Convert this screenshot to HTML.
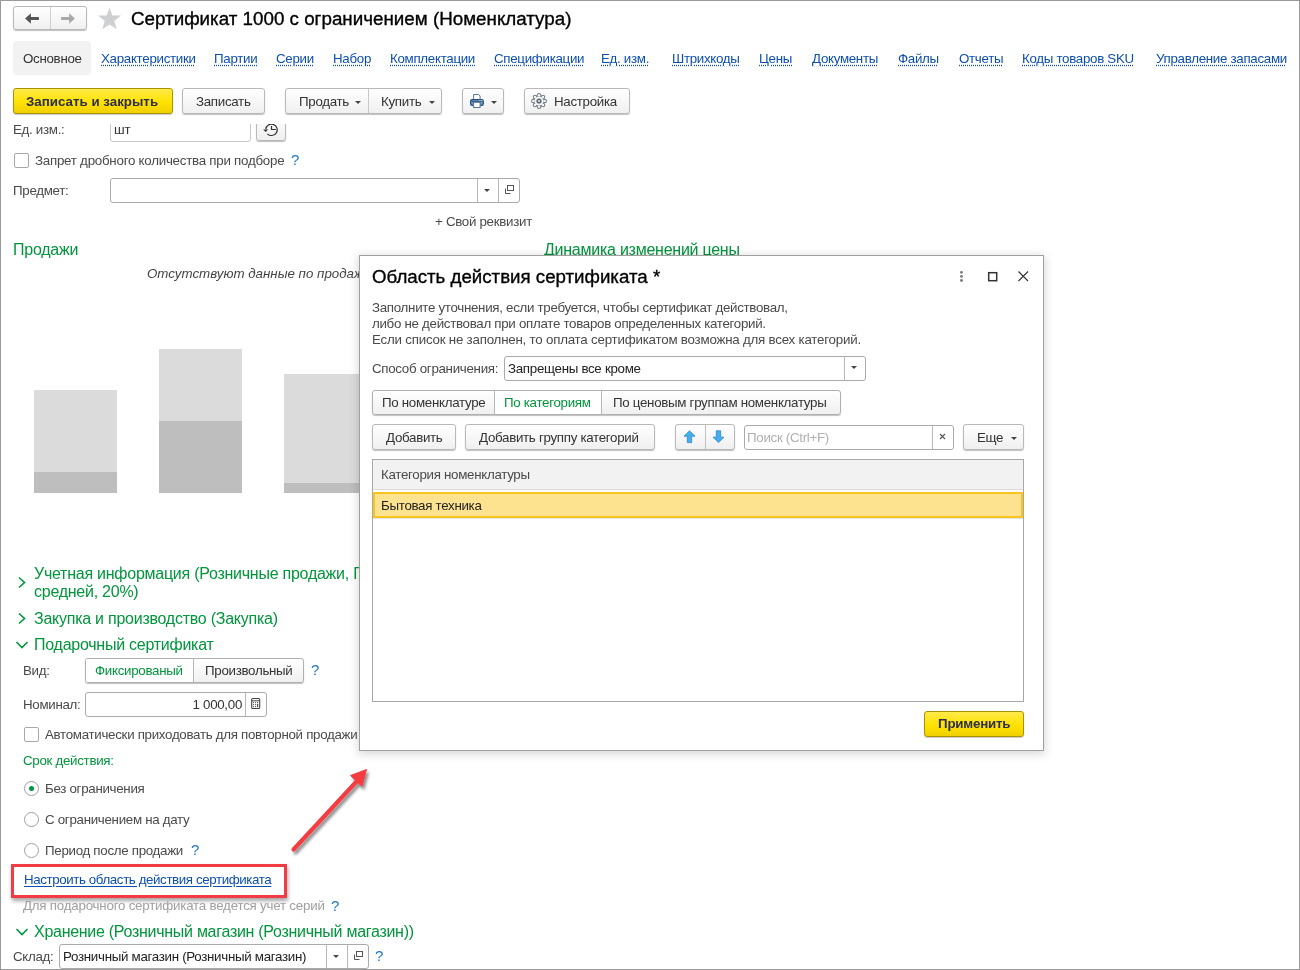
<!DOCTYPE html>
<html><head><meta charset="utf-8">
<style>
*{box-sizing:border-box}
html,body{margin:0;padding:0;width:1300px;height:970px;overflow:hidden;background:#fff}
body{position:relative;font-family:"Liberation Sans",sans-serif;font-size:13.33px;color:#4a4a4a}
.frame{position:absolute;left:0;top:0;width:1300px;height:970px;border-top:1px solid #999;border-left:1px solid #999;border-right:1px solid #999;border-bottom:1px solid #999;z-index:50;pointer-events:none}
.t{position:absolute;will-change:transform;white-space:nowrap;line-height:16px;font-size:13.33px;letter-spacing:-0.3px}
.g{color:#00963c}
.lk{color:#0d4fb0;text-decoration:underline dotted;text-underline-offset:2px}
.h{position:absolute;will-change:transform;white-space:nowrap;line-height:18px;font-size:16px;color:#00963c;letter-spacing:-0.25px}
.btn{position:absolute;height:26px;border:1px solid #b8b8b8;border-radius:3px;background:linear-gradient(#ffffff,#f0f0f0);box-shadow:0 1px 1px rgba(0,0,0,.25)}
.yb{position:absolute;border:1px solid #a89200;border-radius:3px;background:linear-gradient(#ffea4a,#ffe200 55%,#f0d000);box-shadow:0 1px 1px rgba(0,0,0,.2)}
.fld{position:absolute;border:1px solid #aaaaaa;border-radius:3px;background:#fff}
.vl{position:absolute;width:1px;background:#b8b8b8}
.bar{position:absolute}
.q{color:#1f78c8;font-size:14px;line-height:1px;font-weight:bold;letter-spacing:0}
.qq{position:absolute;will-change:transform;color:#1f78c8;font-size:15px;line-height:16px;white-space:nowrap}
.arr{position:absolute;width:0;height:0;border-left:3px solid transparent;border-right:3px solid transparent;border-top:3px solid #444}
</style></head><body>
<div class="frame"></div>

<!-- header -->
<div class="btn" style="left:13px;top:6px;width:74px;height:24px"></div>
<div class="vl" style="left:50px;top:7px;height:22px;background:#d0d0d0"></div>
<svg style="position:absolute;left:24px;top:13px" width="16" height="12" viewBox="0 0 16 12"><path d="M1.1 5.45 L6.9 0.2 V3.9 H14.9 V6.9 H6.9 V10.7 Z" fill="#555"/></svg>
<svg style="position:absolute;left:60px;top:13px" width="16" height="12" viewBox="0 0 16 12"><path d="M14.9 5.45 L9.1 0.2 V3.9 H1.1 V6.9 H9.1 V10.7 Z" fill="#a8a8a8"/></svg>
<svg style="position:absolute;left:97px;top:7px" width="25" height="23" viewBox="0 0 25 23"><path d="M12.5 0.5 L15.4 8.4 L24 8.6 L17.3 13.9 L19.7 22.3 L12.5 17.4 L5.3 22.3 L7.7 13.9 L1 8.6 L9.6 8.4 Z" fill="#cfd0d2"/></svg>
<div class="t" style="left:131px;top:8px;font-size:18.8px;line-height:22px;color:#000;letter-spacing:0;-webkit-text-stroke:0.35px #000">Сертификат 1000 с ограничением (Номенклатура)</div>

<!-- tabs -->
<div style="position:absolute;left:13px;top:41px;width:78px;height:34px;background:#f2f2f2;border-radius:4px"></div>
<div class="t" style="left:23px;top:51px;color:#333">Основное</div>
<div class="t lk" style="left:101px;top:51px">Характеристики</div>
<div class="t lk" style="left:214px;top:51px">Партии</div>
<div class="t lk" style="left:276px;top:51px">Серии</div>
<div class="t lk" style="left:333px;top:51px">Набор</div>
<div class="t lk" style="left:390px;top:51px">Комплектации</div>
<div class="t lk" style="left:494px;top:51px">Спецификации</div>
<div class="t lk" style="left:601px;top:51px">Ед. изм.</div>
<div class="t lk" style="left:672px;top:51px">Штрихкоды</div>
<div class="t lk" style="left:759px;top:51px">Цены</div>
<div class="t lk" style="left:812px;top:51px">Документы</div>
<div class="t lk" style="left:898px;top:51px">Файлы</div>
<div class="t lk" style="left:959px;top:51px">Отчеты</div>
<div class="t lk" style="left:1022px;top:51px">Коды товаров SKU</div>
<div class="t lk" style="left:1156px;top:51px">Управление запасами</div>


<!-- toolbar -->
<div class="yb" style="left:13px;top:88px;width:160px;height:26px"></div>
<div class="t" style="left:26px;top:94px;font-weight:bold;color:#2d2f4a;letter-spacing:0">Записать и закрыть</div>
<div class="btn" style="left:182px;top:88px;width:83px"></div>
<div class="t" style="left:196px;top:94px;color:#333">Записать</div>
<div class="btn" style="left:285px;top:88px;width:157px"></div>
<div class="vl" style="left:368px;top:89px;height:24px;background:#c8c8c8"></div>
<div class="t" style="left:299px;top:94px;color:#333">Продать</div>
<div class="arr" style="left:355px;top:101px"></div>
<div class="t" style="left:381px;top:94px;color:#333">Купить</div>
<div class="arr" style="left:429px;top:101px"></div>
<div class="btn" style="left:462px;top:88px;width:42px"></div>
<svg style="position:absolute;left:469px;top:93px" width="16" height="16" viewBox="0 0 16 16">
<path d="M4.6 1.5 H9.6 L11.1 3 V6.5 H4.6 Z" fill="#fff" stroke="#5d7594" stroke-width="1"/>
<rect x="1.6" y="6.6" width="12.7" height="5.8" rx="1.6" fill="#6f97c4" stroke="#224c7a" stroke-width="1.2"/>
<path d="M2.8 8.5 H13" stroke="#2f5279" stroke-width="0.9"/>
<circle cx="10.9" cy="7.6" r="0.55" fill="#fff"/><circle cx="12.8" cy="7.6" r="0.55" fill="#fff"/>
<rect x="4.6" y="9.3" width="6.5" height="5.2" fill="#fff" stroke="#5d7594" stroke-width="1"/>
</svg>
<div class="arr" style="left:491px;top:101px"></div>
<div class="btn" style="left:524px;top:88px;width:106px"></div>
<svg style="position:absolute;left:530px;top:92px" width="18" height="18" viewBox="0 0 18 18"><g fill="#737b86"><circle cx="9.00" cy="3.30" r="2.25"/><circle cx="13.03" cy="4.97" r="2.25"/><circle cx="14.70" cy="9.00" r="2.25"/><circle cx="13.03" cy="13.03" r="2.25"/><circle cx="9.00" cy="14.70" r="2.25"/><circle cx="4.97" cy="13.03" r="2.25"/><circle cx="3.30" cy="9.00" r="2.25"/><circle cx="4.97" cy="4.97" r="2.25"/><circle cx="9.0" cy="9.0" r="5.6"/></g><g fill="#f3f3f3"><circle cx="9.00" cy="3.30" r="1.25"/><circle cx="13.03" cy="4.97" r="1.25"/><circle cx="14.70" cy="9.00" r="1.25"/><circle cx="13.03" cy="13.03" r="1.25"/><circle cx="9.00" cy="14.70" r="1.25"/><circle cx="4.97" cy="13.03" r="1.25"/><circle cx="3.30" cy="9.00" r="1.25"/><circle cx="4.97" cy="4.97" r="1.25"/><circle cx="9.0" cy="9.0" r="4.6"/></g><circle cx="9.0" cy="9.0" r="2.6" fill="#5f6874"/><circle cx="9.0" cy="9.0" r="0.9" fill="#fff"/></svg>
<div class="t" style="left:554px;top:94px;color:#333">Настройка</div>

<!-- scrolled form top -->
<div style="position:absolute;left:0;top:124px;width:1300px;height:20px;overflow:hidden">
<div style="position:absolute;left:0;top:-124px;width:1300px;height:200px">
<div class="t" style="left:13px;top:122px">Ед. изм.:</div>
<div class="fld" style="left:110px;top:110px;width:141px;height:32px;border-color:#c8c8c8"></div>
<div class="t" style="left:114px;top:122px;color:#333">шт</div>
<div class="btn" style="left:256px;top:110px;width:30px;height:31px"></div>
<svg style="position:absolute;left:258px;top:120px" width="26" height="20" viewBox="0 0 26 20"><path d="M7.8 9.3 A5.7 5.7 0 1 1 9.4 13.8" stroke="#333" fill="none" stroke-width="1.2"/><path d="M5.1 9.4 H10.3 L7.7 12.1 Z" fill="#333"/><path d="M13.5 6.1 V9.5 H17.8" stroke="#333" fill="none" stroke-width="1.2"/></svg>
</div></div>
<div style="position:absolute;left:14px;top:153px;width:15px;height:15px;border:1px solid #a8a8a8;border-radius:2px;background:#fff"></div>
<div class="t" style="left:35px;top:153px;letter-spacing:-0.25px">Запрет дробного количества при подборе</div><div class="qq" style="left:291px;top:152px">?</div>
<div class="t" style="left:13px;top:183px">Предмет:</div>
<div class="fld" style="left:110px;top:178px;width:410px;height:25px"></div>
<div class="vl" style="left:477px;top:179px;height:23px"></div>
<div class="vl" style="left:498px;top:179px;height:23px"></div>
<div class="arr" style="left:484px;top:189px"></div>
<svg style="position:absolute;left:504px;top:184px" width="11" height="11" viewBox="0 0 11 11"><rect x="3.5" y="1.5" width="6" height="5" fill="none" stroke="#555"/><path d="M1.5 4.5V9.5H6.5" fill="none" stroke="#555"/></svg>
<div class="t" style="left:435px;top:214px">+ Свой реквизит</div>

<!-- charts -->
<div class="h" style="left:13px;top:241px">Продажи</div>
<div class="h" style="left:544px;top:241px">Динамика изменений цены</div>
<div class="t" style="left:147px;top:266px;font-style:italic;color:#444;font-size:13.33px;letter-spacing:0">Отсутствуют данные по продажам</div>
<div class="bar" style="left:34px;top:390px;width:83px;height:82px;background:#dbdbdb"></div>
<div class="bar" style="left:34px;top:472px;width:83px;height:21px;background:#bebebe"></div>
<div class="bar" style="left:159px;top:349px;width:83px;height:72px;background:#dbdbdb"></div>
<div class="bar" style="left:159px;top:421px;width:83px;height:72px;background:#bebebe"></div>
<div class="bar" style="left:284px;top:374px;width:83px;height:109px;background:#dbdbdb"></div>
<div class="bar" style="left:284px;top:483px;width:83px;height:10px;background:#bebebe"></div>

<!-- sections -->
<svg style="position:absolute;left:17px;top:576px" width="10" height="13" viewBox="0 0 10 13"><path d="M2 1.5 L7.5 6.5 L2 11.5" fill="none" stroke="#00963c" stroke-width="1.6"/></svg>
<div class="h" style="left:34px;top:565px">Учетная информация (Розничные продажи, По средней, 20%)</div>
<div class="h" style="left:34px;top:583px">средней, 20%)</div>
<svg style="position:absolute;left:17px;top:612px" width="10" height="13" viewBox="0 0 10 13"><path d="M2 1.5 L7.5 6.5 L2 11.5" fill="none" stroke="#00963c" stroke-width="1.6"/></svg>
<div class="h" style="left:34px;top:610px">Закупка и производство (Закупка)</div>
<svg style="position:absolute;left:15px;top:640px" width="14" height="10" viewBox="0 0 14 10"><path d="M1.5 2 L7 7.5 L12.5 2" fill="none" stroke="#00963c" stroke-width="1.6"/></svg>
<div class="h" style="left:34px;top:636px">Подарочный сертификат</div>

<div class="t" style="left:23px;top:663px">Вид:</div>
<div class="btn" style="left:85px;top:658px;width:219px;height:25px;border-color:#b0b0b0"></div>
<div style="position:absolute;left:86px;top:659px;width:107px;height:23px;background:#fff;border-radius:2px 0 0 2px"></div>
<div class="vl" style="left:193px;top:659px;height:23px;background:#b8b8b8"></div>
<div class="t g" style="left:95px;top:663px">Фиксированый</div>
<div class="t" style="left:205px;top:663px;color:#333">Произвольный</div>
<div class="qq" style="left:311px;top:662px">?</div>
<div class="t" style="left:23px;top:697px">Номинал:</div>
<div class="fld" style="left:85px;top:692px;width:182px;height:25px"></div>
<div class="vl" style="left:245px;top:693px;height:23px"></div>
<div class="t" style="left:140px;top:697px;width:102px;text-align:right;color:#333">1 000,00</div>
<svg style="position:absolute;left:250px;top:697px" width="11" height="13" viewBox="0 0 11 13"><rect x="1.7" y="1.5" width="8" height="10" rx="1" fill="none" stroke="#444" stroke-width="1.1"/><path d="M1.7 3.8H9.7" stroke="#444" stroke-width="1"/><g fill="#444"><circle cx="3.5" cy="5.6" r="0.6"/><circle cx="5.6" cy="5.6" r="0.6"/><circle cx="7.6" cy="5.6" r="0.6"/><circle cx="3.5" cy="7.6" r="0.6"/><circle cx="5.6" cy="7.6" r="0.6"/><circle cx="3.5" cy="9.6" r="0.6"/><circle cx="5.6" cy="9.6" r="0.6"/></g><path d="M7.6 7.3V9.8" stroke="#444" stroke-width="1.1" stroke-linecap="round"/></svg>
<div style="position:absolute;left:24px;top:727px;width:15px;height:15px;border:1px solid #a8a8a8;border-radius:2px;background:#fff"></div>
<div class="t" style="left:45px;top:727px">Автоматически приходовать для повторной продажи</div>
<div class="t g" style="left:23px;top:753px">Срок действия:</div>
<div style="position:absolute;left:24px;top:781px;width:15px;height:15px;border:1px solid #a0a0a0;border-radius:50%;background:#fff"></div>
<div style="position:absolute;left:29px;top:786px;width:5px;height:5px;border-radius:50%;background:#00963c"></div>
<div class="t" style="left:45px;top:781px">Без ограничения</div>
<div style="position:absolute;left:24px;top:812px;width:15px;height:15px;border:1px solid #a0a0a0;border-radius:50%;background:#fff"></div>
<div class="t" style="left:45px;top:812px">С ограничением на дату</div>
<div style="position:absolute;left:24px;top:843px;width:15px;height:15px;border:1px solid #a0a0a0;border-radius:50%;background:#fff"></div>
<div class="t" style="left:45px;top:843px">Период после продажи</div><div class="qq" style="left:191px;top:842px">?</div>

<div style="position:absolute;left:11px;top:864px;width:276px;height:34px;border:3px solid #f03c42;box-shadow:1px 3px 4px rgba(0,0,0,.35)"></div>
<div class="t" style="left:24px;top:872px;color:#0d4fb0;text-decoration:underline;text-underline-offset:2px;letter-spacing:-0.4px">Настроить область действия сертификата</div>
<div class="t" style="left:23px;top:898px;color:#a0a0a0;letter-spacing:-0.22px">Для подарочного сертификата ведется учет серий</div><div class="qq" style="left:331px;top:898px">?</div>
<svg style="position:absolute;left:15px;top:927px" width="14" height="10" viewBox="0 0 14 10"><path d="M1.5 2 L7 7.5 L12.5 2" fill="none" stroke="#00963c" stroke-width="1.6"/></svg>
<div class="h" style="left:34px;top:923px;letter-spacing:-0.28px">Хранение (Розничный магазин (Розничный магазин))</div>
<div class="t" style="left:13px;top:949px">Склад:</div>
<div class="fld" style="left:59px;top:944px;width:310px;height:25px"></div>
<div class="vl" style="left:326px;top:945px;height:23px"></div>
<div class="vl" style="left:347px;top:945px;height:23px"></div>
<div class="arr" style="left:333px;top:955px"></div>
<svg style="position:absolute;left:353px;top:950px" width="11" height="11" viewBox="0 0 11 11"><rect x="3.5" y="1.5" width="6" height="5" fill="none" stroke="#555"/><path d="M1.5 4.5V9.5H6.5" fill="none" stroke="#555"/></svg>
<div class="t" style="left:63px;top:949px;color:#222">Розничный магазин (Розничный магазин)</div>
<div class="qq" style="left:375px;top:948px">?</div>


<!-- dialog -->
<div style="position:absolute;left:359px;top:255px;width:685px;height:496px;background:#fff;border:1px solid #a0a0a0;box-shadow:0 2px 9px 1px rgba(0,0,0,.16);z-index:10">
<div style="position:absolute;left:-360px;top:-256px;width:1300px;height:970px">
<div class="t" style="left:372px;top:266px;font-size:18.7px;line-height:22px;color:#000;letter-spacing:0;-webkit-text-stroke:0.35px #000">Область действия сертификата *</div>
<svg style="position:absolute;left:957px;top:269px" width="80" height="16" viewBox="0 0 80 16">
<circle cx="4.5" cy="3.3" r="1.4" fill="#777"/><circle cx="4.5" cy="7.4" r="1.4" fill="#777"/><circle cx="4.5" cy="11.5" r="1.4" fill="#777"/>
<rect x="31.7" y="3.7" width="8" height="8" fill="none" stroke="#333" stroke-width="1.5"/>
<path d="M61.5 2.5 L71 12 M71 2.5 L61.5 12" stroke="#333" stroke-width="1.1"/>
</svg>
<div class="t" style="left:372px;top:300px">Заполните уточнения, если требуется, чтобы сертификат действовал,</div>
<div class="t" style="left:372px;top:316px">либо не действовал при оплате товаров определенных категорий.</div>
<div class="t" style="left:372px;top:332px;letter-spacing:-0.22px">Если список не заполнен, то оплата сертификатом возможна для всех категорий.</div>
<div class="t" style="left:372px;top:361px">Способ ограничения:</div>
<div class="fld" style="left:504px;top:356px;width:362px;height:25px"></div>
<div class="vl" style="left:844px;top:357px;height:23px"></div>
<div class="arr" style="left:851px;top:366px"></div>
<div class="t" style="left:508px;top:361px;color:#222">Запрещены все кроме</div>
<div class="btn" style="left:372px;top:390px;width:469px;height:25px;border-color:#b0b0b0"></div>
<div style="position:absolute;left:495px;top:391px;width:106px;height:23px;background:#fff"></div>
<div class="vl" style="left:494px;top:391px;height:23px;background:#b8b8b8"></div>
<div class="vl" style="left:601px;top:391px;height:23px;background:#b8b8b8"></div>
<div class="t" style="left:382px;top:395px;color:#333">По номенклатуре</div>
<div class="t g" style="left:504px;top:395px">По категориям</div>
<div class="t" style="left:613px;top:395px;color:#333">По ценовым группам номенклатуры</div>

<div class="btn" style="left:372px;top:424px;width:84px;height:26px"></div>
<div class="t" style="left:386px;top:430px;color:#333">Добавить</div>
<div class="btn" style="left:465px;top:424px;width:190px;height:26px"></div>
<div class="t" style="left:479px;top:430px;color:#333">Добавить группу категорий</div>
<div class="btn" style="left:675px;top:424px;width:60px;height:26px"></div>
<div class="vl" style="left:705px;top:425px;height:24px;background:#c0c0c0"></div>
<svg style="position:absolute;left:683px;top:430px" width="13" height="14" viewBox="0 0 13 14"><path d="M6.5 0.8 L12 6.2 H8.7 V12.6 H4.3 V6.2 H1 Z" fill="#45aef0" stroke="#2f86c8" stroke-width="0.8"/></svg>
<svg style="position:absolute;left:712px;top:430px" width="13" height="14" viewBox="0 0 13 14"><path d="M6.5 12.6 L12 7.2 H8.7 V0.8 H4.3 V7.2 H1 Z" fill="#45aef0" stroke="#2f86c8" stroke-width="0.8"/></svg>
<div class="fld" style="left:744px;top:425px;width:210px;height:25px"></div>
<div class="vl" style="left:932px;top:426px;height:23px"></div>
<div class="t" style="left:747px;top:430px;color:#b0b0b0">Поиск (Ctrl+F)</div>
<svg style="position:absolute;left:938px;top:432px" width="9" height="9" viewBox="0 0 9 9"><path d="M2 2 L7 7 M7 2 L2 7" stroke="#555" stroke-width="1.1"/></svg>
<div class="btn" style="left:963px;top:424px;width:61px;height:26px"></div>
<div class="t" style="left:977px;top:430px;color:#333">Еще</div>
<div class="arr" style="left:1011px;top:437px"></div>

<div style="position:absolute;left:372px;top:459px;width:652px;height:243px;border:1px solid #a8a8a8;background:#fff"></div>
<div style="position:absolute;left:373px;top:460px;width:650px;height:30px;background:#f2f2f2;border-bottom:1px solid #dcdcdc"></div>
<div class="t" style="left:381px;top:467px;color:#4a4a4a">Категория номенклатуры</div>
<div style="position:absolute;left:373px;top:492px;width:650px;height:26px;background:#fde28f;border:2px solid #f7c51e"></div>
<div style="position:absolute;left:373px;top:518px;width:650px;height:1px;background:#e4e4e4"></div>
<div class="t" style="left:381px;top:498px;color:#222">Бытовая техника</div>

<div class="yb" style="left:924px;top:711px;width:100px;height:26px"></div>
<div class="t" style="left:938px;top:716px;font-weight:bold;color:#2d2f4a;letter-spacing:-0.2px">Применить</div>
</div></div>

<!-- red arrow -->
<svg style="position:absolute;left:280px;top:760px;z-index:20" width="100" height="100" viewBox="0 0 100 100">
<defs><filter id="sh" x="-30%" y="-30%" width="160%" height="160%"><feGaussianBlur in="SourceAlpha" stdDeviation="1.6"/><feOffset dx="2" dy="3"/><feComponentTransfer><feFuncA type="linear" slope="0.45"/></feComponentTransfer><feMerge><feMergeNode/><feMergeNode in="SourceGraphic"/></feMerge></filter></defs>
<g filter="url(#sh)"><path d="M13.5 89.5 L77 21" stroke="#f43e42" stroke-width="4.2" stroke-linecap="round"/><path d="M86.5 9.5 L70.5 15.5 L82 26.5 Z" fill="#f43e42" stroke="#f43e42" stroke-width="1" stroke-linejoin="round"/></g>
</svg>

</body></html>
